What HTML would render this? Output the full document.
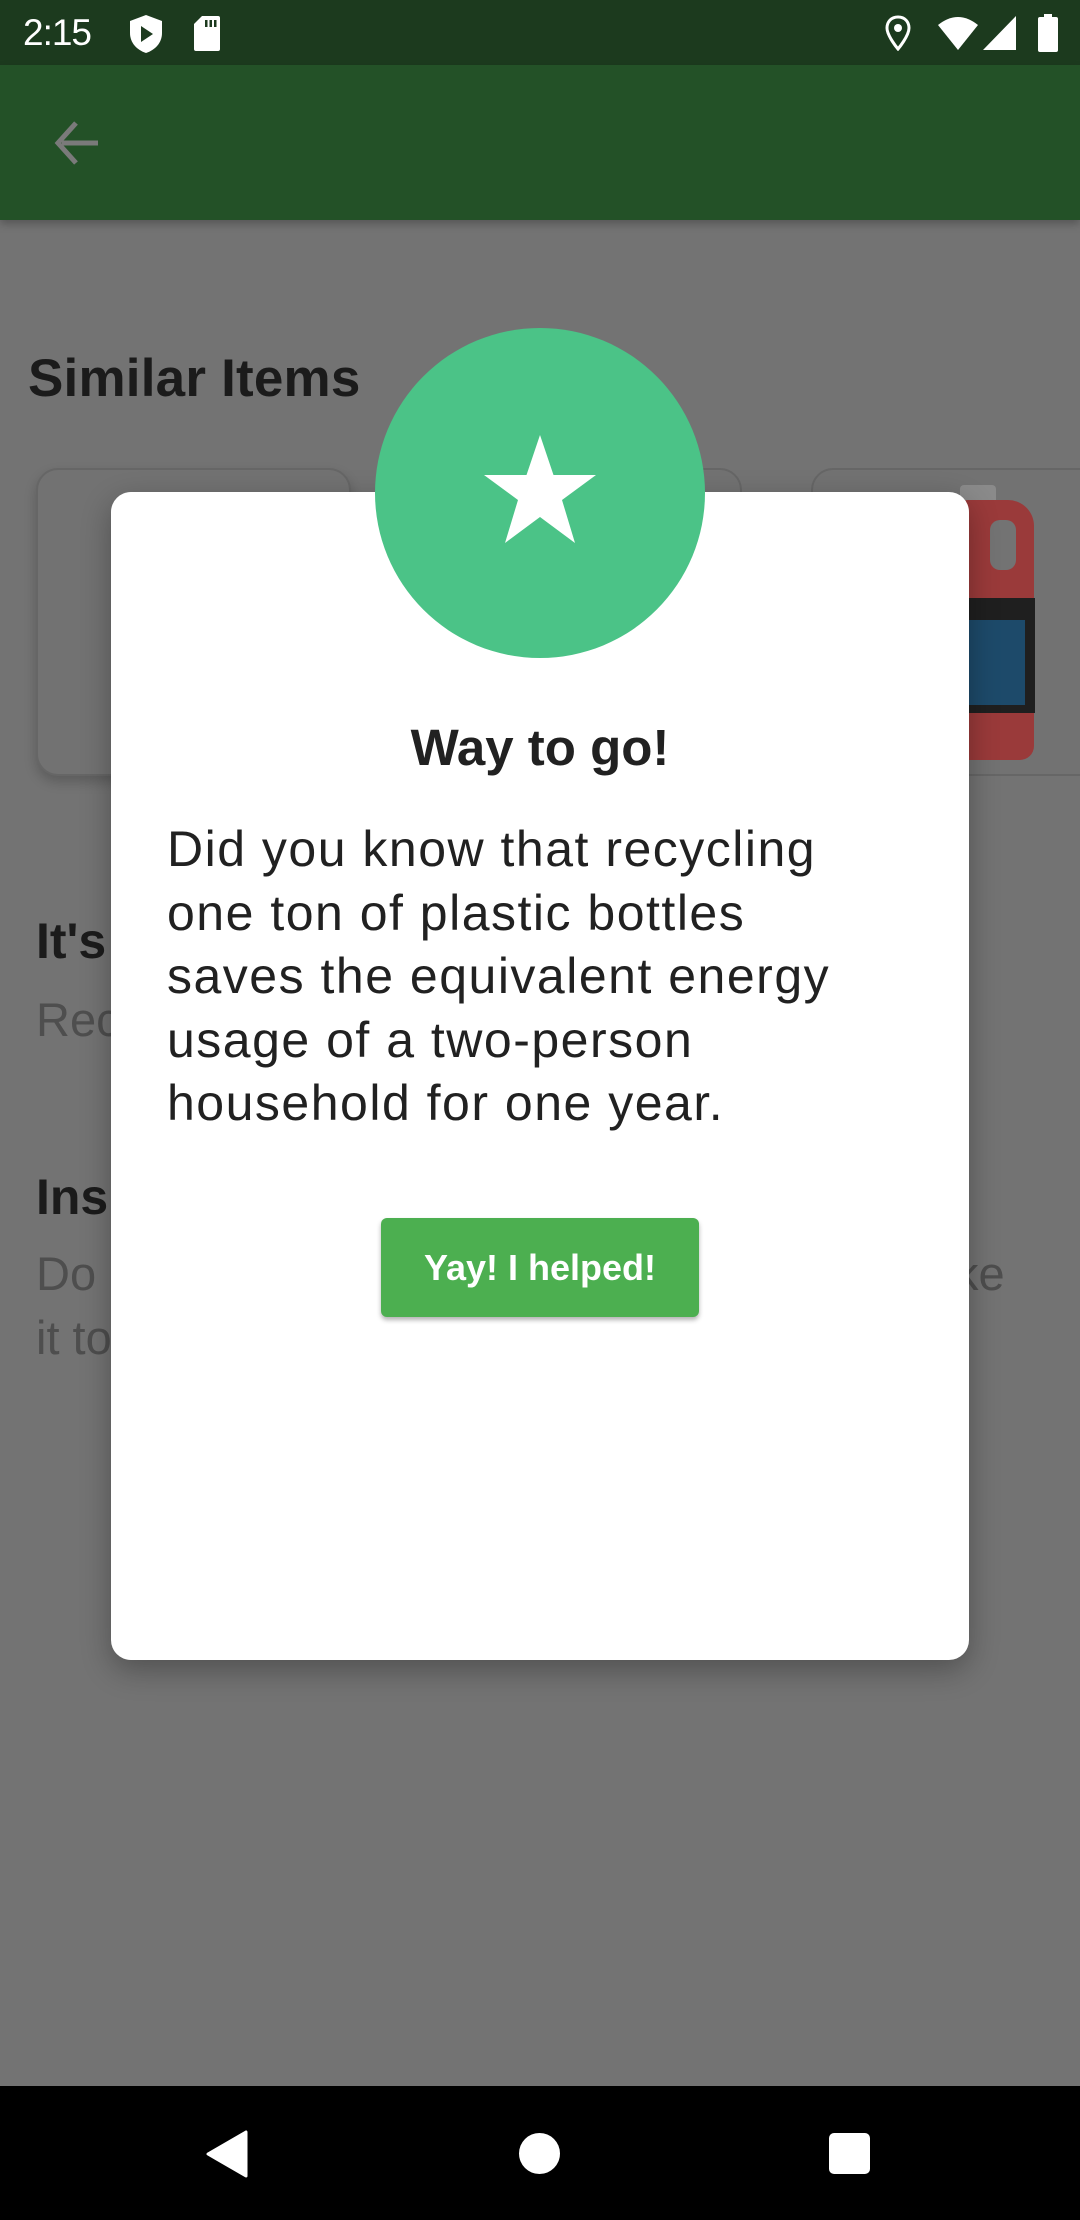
<!DOCTYPE html>
<html><head><meta charset="utf-8"><style>
*{margin:0;padding:0;box-sizing:border-box}
html,body{width:1080px;height:2220px;overflow:hidden;background:#737373;font-family:"Liberation Sans",sans-serif;position:relative}
.abs{position:absolute}
</style></head><body>
<!-- status bar -->
<div class="abs" style="left:0;top:0;width:1080px;height:65px;background:#1c3a1e"></div>
<div class="abs" style="left:23px;top:12px;font-size:37px;color:#fff;letter-spacing:-1px">2:15</div>
<svg class="abs" style="left:128px;top:14px" width="36" height="40" viewBox="0 0 36 40"><path d="M18 1 L34 7 V19 C34 29 27 36 18 39 C9 36 2 29 2 19 V7 Z" fill="#fff"/><path d="M13 12 L25 20 L13 28 Z" fill="#1c3a1e"/></svg>
<svg class="abs" style="left:193px;top:15px" width="28" height="37" viewBox="0 0 28 37"><path d="M9 1 H25 a2 2 0 0 1 2 2 V34 a2 2 0 0 1 -2 2 H3 a2 2 0 0 1 -2 -2 V9 Z" fill="#fff"/><rect x="12" y="5" width="2.5" height="7" fill="#1c3a1e"/><rect x="16.5" y="5" width="2.5" height="7" fill="#1c3a1e"/><rect x="21" y="5" width="2.5" height="7" fill="#1c3a1e"/></svg>
<svg class="abs" style="left:884px;top:15px" width="28" height="36" viewBox="0 0 28 36"><path d="M14 2 C7 2 3 7 3 13 C3 21 14 34 14 34 C14 34 25 21 25 13 C25 7 21 2 14 2 Z" fill="none" stroke="#fff" stroke-width="3"/><circle cx="14" cy="13" r="4" fill="#fff"/></svg>
<svg class="abs" style="left:936px;top:15px" width="44" height="36" viewBox="0 0 44 36"><path d="M2 10 Q22 -6 42 10 L22 35 Z" fill="#fff"/></svg>
<svg class="abs" style="left:982px;top:15px" width="36" height="36" viewBox="0 0 36 36"><path d="M34 1 V35 H1 Z" fill="#fff"/></svg>
<svg class="abs" style="left:1037px;top:14px" width="22" height="38" viewBox="0 0 22 38"><rect x="7" y="0" width="8" height="4" fill="#fff"/><rect x="1" y="3" width="20" height="35" rx="2" fill="#fff"/></svg>
<!-- app bar -->
<div class="abs" style="left:0;top:65px;width:1080px;height:155px;background:#235127;box-shadow:0 4px 8px rgba(0,0,0,.25)"></div>
<svg class="abs" style="left:52px;top:119px" width="50" height="50" viewBox="0 0 50 50"><path d="M46 24 H10 M24 4 L6 24 L24 44" fill="none" stroke="#7a7a7a" stroke-width="5"/></svg>
<!-- background content -->
<div class="abs" style="left:28px;top:348px;font-size:53px;font-weight:bold;color:#1b1b1b;letter-spacing:0.2px">Similar Items</div>
<div class="abs" style="left:36px;top:468px;width:315px;height:308px;border-radius:22px;background:#727272;border:2px solid #666;box-shadow:0 6px 12px rgba(0,0,0,.2)"></div>
<div class="abs" style="left:420px;top:468px;width:322px;height:308px;border-radius:22px;background:#727272;border:2px solid #666"></div>
<div class="abs" style="left:811px;top:468px;width:300px;height:308px;border-radius:22px;background:#727272;border:2px solid #666"></div>
<!-- bottle -->
<div class="abs" style="left:960px;top:485px;width:36px;height:20px;background:#8a8a8a;border-radius:4px"></div>
<div class="abs" style="left:950px;top:500px;width:84px;height:260px;background:#9a3a3a;border-radius:18px 26px 14px 14px"></div>
<div class="abs" style="left:990px;top:520px;width:26px;height:50px;background:#737373;border-radius:10px"></div>
<div class="abs" style="left:950px;top:598px;width:85px;height:115px;background:#1f1f1f"></div>
<div class="abs" style="left:950px;top:620px;width:75px;height:85px;background:#1d4a6a"></div>
<div class="abs" style="left:36px;top:912px;font-size:50px;font-weight:bold;color:#1b1b1b">It's</div>
<div class="abs" style="left:36px;top:992px;font-size:47px;color:#4e4e4e">Rec</div>
<div class="abs" style="left:36px;top:1168px;font-size:50px;font-weight:bold;color:#1b1b1b">Ins</div>
<div class="abs" style="left:36px;top:1246px;font-size:47px;color:#4e4e4e">Do</div>
<div class="abs" style="left:955px;top:1246px;font-size:47px;color:#4e4e4e">ke</div>
<div class="abs" style="left:36px;top:1310px;font-size:47px;color:#4e4e4e">it to</div>
<!-- dialog -->
<div class="abs" style="left:111px;top:492px;width:858px;height:1168px;background:#fff;border-radius:20px;box-shadow:0 10px 30px rgba(0,0,0,.3)"></div>
<div class="abs" style="left:375px;top:328px;width:330px;height:330px;border-radius:50%;background:#4bc387"></div>
<svg class="abs" style="left:482px;top:433px" width="116" height="112" viewBox="0 0 116 112"><path d="M58 2 L71.5 42 L114 42 L80 67 L93 110 L58 84 L23 110 L36 67 L2 42 L44.5 42 Z" fill="#fff"/></svg>
<div class="abs" style="left:111px;top:718px;width:858px;text-align:center;font-size:51px;font-weight:bold;color:#212121">Way to go!</div>
<div class="abs" style="left:167px;top:818px;width:800px;font-size:50px;letter-spacing:1.5px;line-height:63.6px;color:#212121;white-space:nowrap">Did you know that recycling<br>one ton of plastic bottles<br>saves the equivalent energy<br>usage of a two-person<br>household for one year.</div>
<div class="abs" style="left:381px;top:1218px;width:318px;height:99px;background:#4caf50;border-radius:6px;box-shadow:0 3px 5px rgba(0,0,0,.3);color:#fff;font-weight:bold;font-size:36px;text-align:center;line-height:99px">Yay! I helped!</div>
<!-- nav bar -->
<div class="abs" style="left:0;top:2086px;width:1080px;height:134px;background:#000"></div>
<svg class="abs" style="left:204px;top:2130px" width="44" height="48" viewBox="0 0 44 48"><path d="M42 2 V46 L4 24 Z" fill="#fff" stroke="#fff" stroke-width="3" stroke-linejoin="round"/></svg>
<div class="abs" style="left:519px;top:2133px;width:41px;height:41px;border-radius:50%;background:#fff"></div>
<div class="abs" style="left:829px;top:2133px;width:41px;height:41px;border-radius:5px;background:#fff"></div>
</body></html>
